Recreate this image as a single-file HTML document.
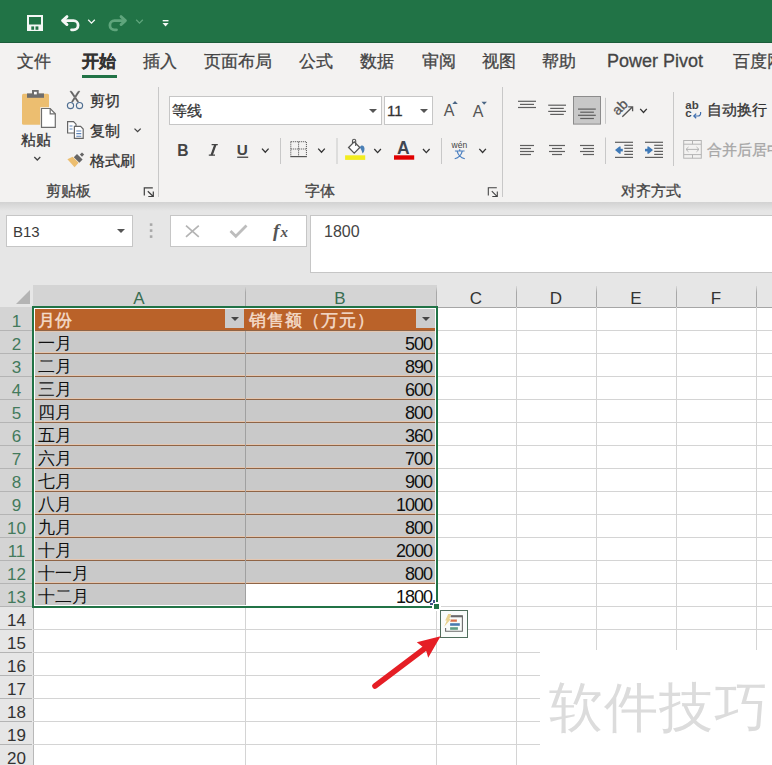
<!DOCTYPE html>
<html><head><meta charset="utf-8">
<style>
*{margin:0;padding:0;box-sizing:border-box}
html,body{width:772px;height:765px;overflow:hidden;background:#fff;font-family:"Liberation Sans",sans-serif}
div{position:absolute}
.a{white-space:nowrap;line-height:1}
.tab{top:53px;font-size:17px;color:#444;white-space:nowrap;line-height:1;-webkit-text-stroke-width:0.3px}
.lbl{font-size:15px;color:#333;line-height:1;white-space:nowrap;-webkit-text-stroke-width:0.3px}
.glbl{top:183px;font-size:15px;color:#444;line-height:1;white-space:nowrap;-webkit-text-stroke-width:0.3px}
.sep{width:1px;background:#c8c8c8}
.box{background:#fff;border:1px solid #c6c6c6}
.tri{width:0;height:0;border-left:4px solid transparent;border-right:4px solid transparent;border-top:4px solid #555}
.rh{font-size:17px;line-height:1;text-align:center;width:33px;left:0}
.ch{font-size:17px;line-height:1;text-align:center;top:290px}
.ct{font-size:17px;line-height:1;white-space:nowrap;color:#111}
.num{font-size:18px;line-height:1;white-space:nowrap;color:#111;text-align:right}
</style></head><body>
<div style="left:0;top:0;width:772px;height:43px;background:#217346;border-bottom:1px solid #1b5c3a"></div>
<svg style="position:absolute;left:0;top:0" width="200" height="42" viewBox="0 0 200 42">
<rect x="27" y="15" width="16" height="16" fill="#f4f7f5"/>
<rect x="29" y="17" width="12" height="7.5" fill="#217346"/>
<rect x="31.3" y="26.4" width="2.8" height="3.4" fill="#217346"/>
<rect x="35.5" y="26.4" width="2.9" height="3.4" fill="#217346"/>
<path d="M63 20.6 H73.5 A4.6 4.6 0 0 1 73.5 29.8 H71.5" fill="none" stroke="#f4f7f5" stroke-width="2.8" stroke-linecap="round"/>
<path d="M67 16.6 L62.6 20.6 L67 24.6" fill="none" stroke="#f4f7f5" stroke-width="2.8" stroke-linecap="round" stroke-linejoin="round"/>
<path d="M88.2 19.8 L91.5 23.1 L94.8 19.8" fill="none" stroke="#f4f7f5" stroke-width="1.3"/>
<path d="M125 20.6 H114.5 A4.6 4.6 0 0 0 114.5 29.8 H116.5" fill="none" stroke="#5fa57c" stroke-width="2.8" stroke-linecap="round"/>
<path d="M121 16.6 L125.4 20.6 L121 24.6" fill="none" stroke="#5fa57c" stroke-width="2.8" stroke-linecap="round" stroke-linejoin="round"/>
<path d="M136.2 19.8 L139.5 23.1 L142.8 19.8" fill="none" stroke="#5fa57c" stroke-width="1.3"/>
<rect x="162.7" y="20" width="5.8" height="1.4" fill="#f4f7f5"/>
<path d="M162.5 23 H168.6 L165.55 26.4 Z" fill="#f4f7f5"/>
</svg>
<div style="left:0;top:43px;width:772px;height:159px;background:#f3f2f1"></div>
<div style="left:0;top:202px;width:772px;height:83px;background:#e6e6e6"></div>
<div style="left:0;top:202px;width:772px;height:9px;background:linear-gradient(#d2d2d2,#e6e6e6)"></div>
<div class="tab" style="left:17px">文件</div>
<div class="tab" style="left:143px">插入</div>
<div class="tab" style="left:204px">页面布局</div>
<div class="tab" style="left:299px">公式</div>
<div class="tab" style="left:360px">数据</div>
<div class="tab" style="left:422px">审阅</div>
<div class="tab" style="left:482px">视图</div>
<div class="tab" style="left:542px">帮助</div>
<div class="tab" style="left:733px">百度网盘</div>
<div class="tab" style="left:82px;font-weight:bold;color:#333">开始</div>
<div style="left:82px;top:75px;width:35px;height:3px;background:#217346"></div>
<div class="tab" style="left:607px;font-size:18px;top:52px">Power Pivot</div>
<div class="lbl" style="left:21px;top:132px">粘贴</div>
<div class="lbl" style="left:90px;top:93px">剪切</div>
<div class="lbl" style="left:90px;top:123px">复制</div>
<div class="lbl" style="left:90px;top:153px">格式刷</div>
<div class="glbl" style="left:46px">剪贴板</div>
<div class="sep" style="left:158px;top:87px;height:110px"></div>
<svg style="position:absolute;left:0;top:80px" width="160" height="125" viewBox="0 80 160 125">
<rect x="22" y="93.8" width="27" height="31" rx="1.5" fill="#ecbe70"/>
<rect x="27" y="93.4" width="17" height="4.4" fill="#6e6e6e"/>
<rect x="32" y="90" width="6.7" height="4" fill="#6e6e6e"/>
<rect x="34" y="91.8" width="2.8" height="2.6" fill="#fff"/>
<path d="M40.2 107.2 H50.8 L56.6 113.2 V128.6 H40.2 Z" fill="#f3f2f1"/>
<path d="M41.5 108.5 H50.2 L55.3 113.8 V127.3 H41.5 Z" fill="#fff" stroke="#6e6e6e" stroke-width="1.2"/>
<path d="M50.2 108.5 V113.8 H55.3" fill="none" stroke="#6e6e6e" stroke-width="1.2"/>
<path d="M34.3 157 L37.3 160 L40.3 157" fill="none" stroke="#444" stroke-width="1.3"/>
<path d="M134.5 128.6 L137.6 131.7 L140.7 128.6" fill="none" stroke="#444" stroke-width="1.3"/>
<path d="M70 91.2 L71.8 91.4 L78.6 101.6 L77.6 102.2 Z M79.8 91.2 L78 91.4 L71.6 101.6 L72.6 102.2 Z" fill="#5f5f5f" stroke="#5f5f5f" stroke-width="0.6"/>
<circle cx="70.5" cy="105.6" r="3.1" fill="none" stroke="#4f6f92" stroke-width="1.2"/>
<circle cx="79.5" cy="105.6" r="3.1" fill="none" stroke="#4f6f92" stroke-width="1.2"/>
<path d="M67.6 121.6 H73.5 L76 124.2 V133 H67.6 Z" fill="#fff" stroke="#666" stroke-width="1.2"/>
<path d="M69.5 126 H72.5 M69.5 129 H72.5" stroke="#5c83b8" stroke-width="1.1"/>
<path d="M74.4 126.4 H80.6 L83.2 129 V138.3 H74.4 Z" fill="#fff" stroke="#666" stroke-width="1.2"/>
<path d="M76.3 131 H81.3 M76.3 133.6 H81.3 M76.3 136.2 H81.3" stroke="#5c83b8" stroke-width="1.1"/>
<path d="M82 152.4 L84.2 154.6 L82 156.8 L79.8 154.6 Z" fill="#666"/>
<path d="M73.8 157.2 L77 154 L82.6 159.6 L79.4 162.8 Z" fill="#666"/>
<path d="M67.4 159.2 L72.6 156.8 L78.6 162.8 L74.6 167.2 Z" fill="#ecbe70"/>
<path d="M144.3 195.5 V187.8 H152.8 M147.8 191.2 L153 196.3 M153.3 191.5 V196.5 H148.3" fill="none" stroke="#404040" stroke-width="1.2"/>
</svg>
<div class="box" style="left:169px;top:96px;width:213px;height:29px"></div>
<div class="lbl" style="left:172px;top:103px">等线</div>
<div class="tri" style="left:369px;top:109px"></div>
<div class="box" style="left:384px;top:96px;width:49px;height:29px"></div>
<div class="lbl" style="left:387px;top:103px">11</div>
<div class="tri" style="left:420px;top:109px"></div>
<div class="glbl" style="left:305px">字体</div>
<div class="sep" style="left:502px;top:87px;height:110px"></div>
<svg style="position:absolute;left:160px;top:85px" width="612" height="120" viewBox="160 85 612 120"><text x="443.8" y="115.8" font-family="Liberation Sans" font-size="16" fill="#555">A</text><path d="M452.3 104 L455 100.9 L457.8 104 Z" fill="#4a6584"/><text x="472.8" y="117" font-family="Liberation Sans" font-size="16" fill="#555">A</text><path d="M481.5 101.7 L484.2 104.8 L486.9 101.7 Z" fill="#4a6584"/><text x="177.3" y="155.8" font-family="Liberation Sans" font-weight="bold" font-size="15.6" fill="#444">B</text><path d="M211.6 144.6 H217.8 M208.8 155.2 H215 M215.4 144.6 L211.6 155.2" fill="none" stroke="#444" stroke-width="1.3"/><path d="M214.2 144.6 L216.6 144.6 L212.8 155.2 L210.4 155.2 Z" fill="#444"/><text x="236.8" y="155.4" font-family="Liberation Sans" font-weight="bold" font-size="15.3" fill="#444">U</text><rect x="237.2" y="156.6" width="11" height="1.3" fill="#444"/><path d="M262 148.6 L265.3 152.2 L268.6 148.6" fill="none" stroke="#333" stroke-width="1.3"/><rect x="280" y="138" width="1" height="26" fill="#c8c8c8"/><path d="M290.8 141.7 H306.4 V156 M290.8 141.7 V156 M290.8 149 H306.4 M298.6 141.7 V156" fill="none" stroke="#444" stroke-width="1" stroke-dasharray="1 1"/><rect x="290.3" y="156" width="16.6" height="1.2" fill="#555"/><path d="M318.2 148.6 L321.5 152.2 L324.8 148.6" fill="none" stroke="#333" stroke-width="1.3"/><rect x="336.5" y="138" width="1" height="26" fill="#c8c8c8"/><path d="M348.6 147.5 L354.2 141.9 L359.8 147.5 L354.2 153.1 Z" fill="#fff" stroke="#555" stroke-width="1.3"/><path d="M352.5 143.6 V140.8 A1.6 1.6 0 0 1 355.7 140.8 V146" fill="none" stroke="#555" stroke-width="1.1"/><path d="M359.8 147.5 C361 144.5 364.2 145 364.5 148.5 C364.6 151 363.5 152.8 362.5 153.5 C362 151 361 149 359.8 147.5 Z" fill="#4a7fb5"/><rect x="345.1" y="155.3" width="20.1" height="4.6" fill="#f2ec1e"/><path d="M374.3 149 L377.6 152.6 L380.90000000000003 149" fill="none" stroke="#333" stroke-width="1.3"/><text x="396.9" y="154.1" font-family="Liberation Sans" font-weight="bold" font-size="17.5" fill="#404650">A</text><rect x="394" y="155.3" width="20.2" height="4.4" fill="#e00000"/><path d="M423 149 L426.3 152.6 L429.6 149" fill="none" stroke="#333" stroke-width="1.3"/><rect x="441" y="138" width="1" height="26" fill="#c8c8c8"/><text x="451.6" y="148.2" font-family="Liberation Sans" font-size="8.5" fill="#444">wén</text><path d="M454.9 151 H464.6 M459.7 149.2 V151 M457.2 151.3 C458 154.5 460.5 157.5 464.8 158.8 M462.2 151.3 C461.4 154.5 459 157.5 454.7 158.8" fill="none" stroke="#4a7fc0" stroke-width="1.2"/><path d="M479.3 148.9 L482.6 152.5 L485.90000000000003 148.9" fill="none" stroke="#333" stroke-width="1.3"/><path d="M488.3 195.5 V187.8 H496.8 M491.8 191.2 L497 196.3 M497.3 191.5 V196.5 H492.3" fill="none" stroke="#404040" stroke-width="1.05"/><rect x="518" y="100.7" width="18" height="1.2" fill="#5f5f5f"/><rect x="520" y="103.80000000000001" width="14" height="1.2" fill="#5f5f5f"/><rect x="518" y="106.9" width="18" height="1.2" fill="#5f5f5f"/><rect x="548.2" y="104.60000000000001" width="17.799999999999955" height="1.2" fill="#5f5f5f"/><rect x="550.2" y="107.80000000000001" width="13.599999999999909" height="1.2" fill="#5f5f5f"/><rect x="548.2" y="110.80000000000001" width="17.799999999999955" height="1.2" fill="#5f5f5f"/><rect x="550.2" y="113.80000000000001" width="13.599999999999909" height="1.2" fill="#5f5f5f"/><rect x="573.5" y="96.5" width="27" height="27.6" fill="#c8c8c8" stroke="#8c8c8c" stroke-width="1"/><rect x="578" y="108.5" width="17.799999999999955" height="1.2" fill="#5f5f5f"/><rect x="580.2" y="111.60000000000001" width="13.699999999999932" height="1.2" fill="#5f5f5f"/><rect x="578" y="114.7" width="17.799999999999955" height="1.2" fill="#5f5f5f"/><rect x="580.2" y="117.9" width="13.699999999999932" height="1.2" fill="#5f5f5f"/><rect x="605" y="97.8" width="1" height="26" fill="#c8c8c8"/><text x="0" y="0" font-family="Liberation Sans" font-size="14" fill="#555" stroke="#555" stroke-width="0.3" transform="translate(617.8 116) rotate(-45)">ab</text><path d="M622.3 116.8 L632.6 106.7 M628.2 106.9 H632.6 V111.3" fill="none" stroke="#555" stroke-width="1.3"/><path d="M640.2 108.9 L643.5 112.5 L646.8000000000001 108.9" fill="none" stroke="#333" stroke-width="1.3"/><rect x="520" y="144.9" width="14" height="1.2" fill="#5f5f5f"/><rect x="520" y="147.9" width="11" height="1.2" fill="#5f5f5f"/><rect x="520" y="150.9" width="14" height="1.2" fill="#5f5f5f"/><rect x="520" y="153.9" width="11" height="1.2" fill="#5f5f5f"/><rect x="549" y="144.9" width="16" height="1.2" fill="#5f5f5f"/><rect x="552" y="147.9" width="10" height="1.2" fill="#5f5f5f"/><rect x="549" y="150.9" width="16" height="1.2" fill="#5f5f5f"/><rect x="552" y="153.9" width="10" height="1.2" fill="#5f5f5f"/><rect x="580" y="144.9" width="14" height="1.2" fill="#5f5f5f"/><rect x="583" y="147.9" width="11" height="1.2" fill="#5f5f5f"/><rect x="580" y="150.9" width="14" height="1.2" fill="#5f5f5f"/><rect x="583" y="153.9" width="11" height="1.2" fill="#5f5f5f"/><rect x="605" y="137.5" width="1" height="26.5" fill="#c8c8c8"/><rect x="615" y="141.70000000000002" width="18" height="1.2" fill="#5f5f5f"/><rect x="624.3" y="144.70000000000002" width="8.700000000000045" height="1.2" fill="#5f5f5f"/><rect x="624.3" y="147.70000000000002" width="8.700000000000045" height="1.2" fill="#5f5f5f"/><rect x="624.3" y="150.8" width="8.700000000000045" height="1.2" fill="#5f5f5f"/><rect x="624.3" y="153.8" width="8.700000000000045" height="1.2" fill="#5f5f5f"/><rect x="615" y="156.8" width="18" height="1.2" fill="#5f5f5f"/><path d="M622.8 150.1 H618" stroke="#3f7ab8" stroke-width="2.6"/><path d="M615 150.1 L619.4 146.4 L620.6 146.4 L620.6 153.8 L619.4 153.8 Z" fill="#3f7ab8"/><rect x="645" y="141.70000000000002" width="18" height="1.2" fill="#5f5f5f"/><rect x="654.2" y="144.70000000000002" width="8.799999999999955" height="1.2" fill="#5f5f5f"/><rect x="654.2" y="147.70000000000002" width="8.799999999999955" height="1.2" fill="#5f5f5f"/><rect x="654.2" y="150.8" width="8.799999999999955" height="1.2" fill="#5f5f5f"/><rect x="654.2" y="153.8" width="8.799999999999955" height="1.2" fill="#5f5f5f"/><rect x="645" y="156.8" width="18" height="1.2" fill="#5f5f5f"/><path d="M645 150.1 H649.8" stroke="#3f7ab8" stroke-width="2.6"/><path d="M653 150.1 L648.6 146.4 L647.4 146.4 L647.4 153.8 L648.6 153.8 Z" fill="#3f7ab8"/><text x="685.3" y="109.4" font-family="Liberation Sans" font-weight="bold" font-size="11.5" fill="#444">ab</text><text x="685.3" y="117.4" font-family="Liberation Sans" font-weight="bold" font-size="11.5" fill="#444">c</text><path d="M700.6 112 V113.5 A2.5 2.5 0 0 1 698 116 H694 M696.2 113.6 L693.8 116 L696.2 118.3" fill="none" stroke="#3f6fb0" stroke-width="1.2"/><rect x="683.7" y="140.5" width="17.6" height="17.7" fill="none" stroke="#b4b4b4" stroke-width="1"/><path d="M683.7 144.2 H701.3 M683.7 154.6 H701.3 M692.5 140.5 V144.2 M692.5 154.6 V158.2 M686 149.4 H699 M688.5 147 L686 149.4 L688.5 151.8 M696.5 147 L699 149.4 L696.5 151.8" fill="none" stroke="#b4b4b4" stroke-width="1"/></svg>
<div class="glbl" style="left:621px">对齐方式</div>
<div class="lbl" style="left:707px;top:102px">自动换行</div>
<div class="lbl" style="left:707px;top:142px;color:#a6a6a6">合并后居中</div>
<div class="sep" style="left:673px;top:92px;height:74px"></div>
<div class="box" style="left:6px;top:215px;width:127px;height:32px"></div>
<div class="a" style="left:13px;top:224px;font-size:15px;color:#3a3a3a">B13</div>
<div class="tri" style="left:117px;top:229px"></div>
<div class="box" style="left:170px;top:215px;width:137px;height:32px"></div>
<div class="box" style="left:310px;top:215px;width:470px;height:58px"></div>
<div class="a" style="left:324px;top:224px;font-size:16px;color:#444">1800</div>
<svg style="position:absolute;left:140px;top:210px" width="170" height="40" viewBox="140 210 170 40">
<rect x="149.8" y="223.3" width="2.6" height="2.6" fill="#a8a8a8"/>
<rect x="149.8" y="229.3" width="2.6" height="2.6" fill="#a8a8a8"/>
<rect x="149.8" y="235.3" width="2.6" height="2.6" fill="#a8a8a8"/>
<path d="M186 225.6 L198.8 236.8 M198.8 225.6 L186 236.8" stroke="#b4b4b4" stroke-width="1.7"/>
<path d="M230.5 231 L235.8 236.3 L246.5 225.6" fill="none" stroke="#bdbdbd" stroke-width="2.8"/>
<text x="273" y="236.8" font-family="Liberation Serif" font-style="italic" font-weight="bold" font-size="19" fill="#555">f</text>
<text x="280.6" y="236.8" font-family="Liberation Serif" font-style="italic" font-weight="bold" font-size="15" fill="#555">x</text>
</svg>
<div style="left:0;top:285px;width:772px;height:22px;background:#e6e6e6"></div>
<div style="left:33px;top:285px;width:404px;height:22px;background:#d4d4d4"></div>
<div style="left:16px;top:290px;width:0;height:0;border-left:14px solid transparent;border-bottom:14px solid #b4b4b4"></div>
<div style="left:0;top:307px;width:33px;height:1px;background:#bdbdbd"></div>
<div style="left:436px;top:307px;width:336px;height:1px;background:#a6a6a6"></div>
<div style="left:245px;top:286px;width:1px;height:21px;background:linear-gradient(#d8d8d8,#a8a8a8 30%)"></div>
<div style="left:436px;top:286px;width:1px;height:21px;background:linear-gradient(#d8d8d8,#a8a8a8 30%)"></div>
<div style="left:516px;top:286px;width:1px;height:21px;background:linear-gradient(#d8d8d8,#a8a8a8 30%)"></div>
<div style="left:596px;top:286px;width:1px;height:21px;background:linear-gradient(#d8d8d8,#a8a8a8 30%)"></div>
<div style="left:676px;top:286px;width:1px;height:21px;background:linear-gradient(#d8d8d8,#a8a8a8 30%)"></div>
<div style="left:756px;top:286px;width:1px;height:21px;background:linear-gradient(#d8d8d8,#a8a8a8 30%)"></div>
<div class="ch" style="left:119px;width:40px;color:#3a6e52">A</div>
<div class="ch" style="left:320px;width:40px;color:#3a6e52">B</div>
<div class="ch" style="left:456px;width:40px;color:#333">C</div>
<div class="ch" style="left:536px;width:40px;color:#333">D</div>
<div class="ch" style="left:616px;width:40px;color:#333">E</div>
<div class="ch" style="left:696px;width:40px;color:#333">F</div>
<div style="left:0;top:307px;width:33px;height:300px;background:#d4d4d4"></div>
<div style="left:0;top:607px;width:33px;height:158px;background:#e6e6e6"></div>
<div style="left:33px;top:607px;width:1px;height:158px;background:#b8b8b8"></div>
<div style="left:0;top:330px;width:32px;height:1px;background:#b4b4b4"></div>
<div class="rh" style="top:313px;color:#437a5c">1</div>
<div style="left:0;top:353px;width:32px;height:1px;background:#b4b4b4"></div>
<div class="rh" style="top:336px;color:#437a5c">2</div>
<div style="left:0;top:376px;width:32px;height:1px;background:#b4b4b4"></div>
<div class="rh" style="top:359px;color:#437a5c">3</div>
<div style="left:0;top:399px;width:32px;height:1px;background:#b4b4b4"></div>
<div class="rh" style="top:382px;color:#437a5c">4</div>
<div style="left:0;top:422px;width:32px;height:1px;background:#b4b4b4"></div>
<div class="rh" style="top:405px;color:#437a5c">5</div>
<div style="left:0;top:445px;width:32px;height:1px;background:#b4b4b4"></div>
<div class="rh" style="top:428px;color:#437a5c">6</div>
<div style="left:0;top:468px;width:32px;height:1px;background:#b4b4b4"></div>
<div class="rh" style="top:451px;color:#437a5c">7</div>
<div style="left:0;top:491px;width:32px;height:1px;background:#b4b4b4"></div>
<div class="rh" style="top:474px;color:#437a5c">8</div>
<div style="left:0;top:514px;width:32px;height:1px;background:#b4b4b4"></div>
<div class="rh" style="top:497px;color:#437a5c">9</div>
<div style="left:0;top:537px;width:32px;height:1px;background:#b4b4b4"></div>
<div class="rh" style="top:520px;color:#437a5c">10</div>
<div style="left:0;top:560px;width:32px;height:1px;background:#b4b4b4"></div>
<div class="rh" style="top:543px;color:#437a5c">11</div>
<div style="left:0;top:583px;width:32px;height:1px;background:#b4b4b4"></div>
<div class="rh" style="top:566px;color:#437a5c">12</div>
<div style="left:0;top:606px;width:32px;height:1px;background:#b4b4b4"></div>
<div class="rh" style="top:589px;color:#437a5c">13</div>
<div style="left:0;top:629px;width:32px;height:1px;background:#b4b4b4"></div>
<div class="rh" style="top:612px;color:#333">14</div>
<div style="left:0;top:652px;width:32px;height:1px;background:#b4b4b4"></div>
<div class="rh" style="top:635px;color:#333">15</div>
<div style="left:0;top:675px;width:32px;height:1px;background:#b4b4b4"></div>
<div class="rh" style="top:658px;color:#333">16</div>
<div style="left:0;top:698px;width:32px;height:1px;background:#b4b4b4"></div>
<div class="rh" style="top:681px;color:#333">17</div>
<div style="left:0;top:721px;width:32px;height:1px;background:#b4b4b4"></div>
<div class="rh" style="top:704px;color:#333">18</div>
<div style="left:0;top:744px;width:32px;height:1px;background:#b4b4b4"></div>
<div class="rh" style="top:727px;color:#333">19</div>
<div style="left:0;top:767px;width:32px;height:1px;background:#b4b4b4"></div>
<div class="rh" style="top:750px;color:#333">20</div>
<div style="left:436px;top:330px;width:336px;height:1px;background:#d4d4d4"></div>
<div style="left:436px;top:353px;width:336px;height:1px;background:#d4d4d4"></div>
<div style="left:436px;top:376px;width:336px;height:1px;background:#d4d4d4"></div>
<div style="left:436px;top:399px;width:336px;height:1px;background:#d4d4d4"></div>
<div style="left:436px;top:422px;width:336px;height:1px;background:#d4d4d4"></div>
<div style="left:436px;top:445px;width:336px;height:1px;background:#d4d4d4"></div>
<div style="left:436px;top:468px;width:336px;height:1px;background:#d4d4d4"></div>
<div style="left:436px;top:491px;width:336px;height:1px;background:#d4d4d4"></div>
<div style="left:436px;top:514px;width:336px;height:1px;background:#d4d4d4"></div>
<div style="left:436px;top:537px;width:336px;height:1px;background:#d4d4d4"></div>
<div style="left:436px;top:560px;width:336px;height:1px;background:#d4d4d4"></div>
<div style="left:436px;top:583px;width:336px;height:1px;background:#d4d4d4"></div>
<div style="left:436px;top:606px;width:336px;height:1px;background:#d4d4d4"></div>
<div style="left:436px;top:629px;width:336px;height:1px;background:#d4d4d4"></div>
<div style="left:436px;top:652px;width:336px;height:1px;background:#d4d4d4"></div>
<div style="left:436px;top:675px;width:336px;height:1px;background:#d4d4d4"></div>
<div style="left:436px;top:698px;width:336px;height:1px;background:#d4d4d4"></div>
<div style="left:436px;top:721px;width:336px;height:1px;background:#d4d4d4"></div>
<div style="left:436px;top:744px;width:336px;height:1px;background:#d4d4d4"></div>
<div style="left:436px;top:767px;width:336px;height:1px;background:#d4d4d4"></div>
<div style="left:33px;top:629px;width:403px;height:1px;background:#d4d4d4"></div>
<div style="left:33px;top:652px;width:403px;height:1px;background:#d4d4d4"></div>
<div style="left:33px;top:675px;width:403px;height:1px;background:#d4d4d4"></div>
<div style="left:33px;top:698px;width:403px;height:1px;background:#d4d4d4"></div>
<div style="left:33px;top:721px;width:403px;height:1px;background:#d4d4d4"></div>
<div style="left:33px;top:744px;width:403px;height:1px;background:#d4d4d4"></div>
<div style="left:33px;top:767px;width:403px;height:1px;background:#d4d4d4"></div>
<div style="left:436px;top:307px;width:1px;height:458px;background:#d4d4d4"></div>
<div style="left:516px;top:307px;width:1px;height:458px;background:#d4d4d4"></div>
<div style="left:596px;top:307px;width:1px;height:458px;background:#d4d4d4"></div>
<div style="left:676px;top:307px;width:1px;height:458px;background:#d4d4d4"></div>
<div style="left:756px;top:307px;width:1px;height:458px;background:#d4d4d4"></div>
<div style="left:245px;top:607px;width:1px;height:158px;background:#d4d4d4"></div>
<div style="left:34px;top:308px;width:402px;height:298px;background:#fff"></div>
<div style="left:35px;top:309px;width:400px;height:296px;background:#c9c9c9"></div>
<div style="left:35px;top:309px;width:400px;height:21px;background:#ba6229"></div>
<div style="left:246px;top:584px;width:190px;height:22px;background:#fff"></div>
<div style="left:35px;top:330px;width:400px;height:1px;background:#8f6446"></div>
<div style="left:35px;top:331px;width:400px;height:1px;background:#e4c6b0"></div>
<div style="left:35px;top:352px;width:400px;height:1px;background:#e4c6b0"></div>
<div style="left:35px;top:353px;width:400px;height:1px;background:#8f6446"></div>
<div style="left:35px;top:375px;width:400px;height:1px;background:#e4c6b0"></div>
<div style="left:35px;top:376px;width:400px;height:1px;background:#8f6446"></div>
<div style="left:35px;top:398px;width:400px;height:1px;background:#e4c6b0"></div>
<div style="left:35px;top:399px;width:400px;height:1px;background:#8f6446"></div>
<div style="left:35px;top:421px;width:400px;height:1px;background:#e4c6b0"></div>
<div style="left:35px;top:422px;width:400px;height:1px;background:#8f6446"></div>
<div style="left:35px;top:444px;width:400px;height:1px;background:#e4c6b0"></div>
<div style="left:35px;top:445px;width:400px;height:1px;background:#8f6446"></div>
<div style="left:35px;top:467px;width:400px;height:1px;background:#e4c6b0"></div>
<div style="left:35px;top:468px;width:400px;height:1px;background:#8f6446"></div>
<div style="left:35px;top:490px;width:400px;height:1px;background:#e4c6b0"></div>
<div style="left:35px;top:491px;width:400px;height:1px;background:#8f6446"></div>
<div style="left:35px;top:513px;width:400px;height:1px;background:#e4c6b0"></div>
<div style="left:35px;top:514px;width:400px;height:1px;background:#8f6446"></div>
<div style="left:35px;top:536px;width:400px;height:1px;background:#e4c6b0"></div>
<div style="left:35px;top:537px;width:400px;height:1px;background:#8f6446"></div>
<div style="left:35px;top:559px;width:400px;height:1px;background:#e4c6b0"></div>
<div style="left:35px;top:560px;width:400px;height:1px;background:#8f6446"></div>
<div style="left:35px;top:582px;width:400px;height:1px;background:#e4c6b0"></div>
<div style="left:35px;top:583px;width:400px;height:1px;background:#8f6446"></div>
<div style="left:245px;top:331px;width:1px;height:274px;background:#a0a0a0"></div>
<div style="left:225px;top:309px;width:19px;height:19px;background:#cbcbcb"></div>
<div class="tri" style="left:231px;top:317px;border-top-color:#444"></div>
<div style="left:416px;top:309px;width:19px;height:19px;background:#cbcbcb"></div>
<div class="tri" style="left:422px;top:317px;border-top-color:#444"></div>
<div class="ct" style="left:38px;top:312px;color:#f4dccb;-webkit-text-stroke-width:0.45px">月份</div>
<div class="ct" style="left:249px;top:312px;color:#f4dccb;letter-spacing:1px;-webkit-text-stroke-width:0.45px">销售额（万元）</div>
<div class="ct" style="left:38px;top:335px">一月</div>
<div class="num" style="left:300px;width:132px;top:335px;letter-spacing:-1px">500</div>
<div class="ct" style="left:38px;top:358px">二月</div>
<div class="num" style="left:300px;width:132px;top:358px;letter-spacing:-1px">890</div>
<div class="ct" style="left:38px;top:381px">三月</div>
<div class="num" style="left:300px;width:132px;top:381px;letter-spacing:-1px">600</div>
<div class="ct" style="left:38px;top:404px">四月</div>
<div class="num" style="left:300px;width:132px;top:404px;letter-spacing:-1px">800</div>
<div class="ct" style="left:38px;top:427px">五月</div>
<div class="num" style="left:300px;width:132px;top:427px;letter-spacing:-1px">360</div>
<div class="ct" style="left:38px;top:450px">六月</div>
<div class="num" style="left:300px;width:132px;top:450px;letter-spacing:-1px">700</div>
<div class="ct" style="left:38px;top:473px">七月</div>
<div class="num" style="left:300px;width:132px;top:473px;letter-spacing:-1px">900</div>
<div class="ct" style="left:38px;top:496px">八月</div>
<div class="num" style="left:300px;width:132px;top:496px;letter-spacing:-1px">1000</div>
<div class="ct" style="left:38px;top:519px">九月</div>
<div class="num" style="left:300px;width:132px;top:519px;letter-spacing:-1px">800</div>
<div class="ct" style="left:38px;top:542px">十月</div>
<div class="num" style="left:300px;width:132px;top:542px;letter-spacing:-1px">2000</div>
<div class="ct" style="left:38px;top:565px">十一月</div>
<div class="num" style="left:300px;width:132px;top:565px;letter-spacing:-1px">800</div>
<div class="ct" style="left:38px;top:588px">十二月</div>
<div class="num" style="left:300px;width:132px;top:588px;letter-spacing:-1px">1800</div>
<div style="left:32px;top:306px;width:406px;height:302px;border:2px solid #217346"></div>
<div style="left:432px;top:602px;width:9px;height:9px;background:#fff"></div>
<div style="left:434px;top:604px;width:5px;height:5px;background:#217346"></div>
<div style="left:430px;top:603px;width:3px;height:2px;background:#44538a"></div>
<div style="left:433px;top:600px;width:2px;height:3px;background:#44538a"></div>
<svg style="position:absolute;left:360px;top:600px" width="120" height="100" viewBox="360 600 120 100">
<rect x="440.5" y="610.5" width="27" height="27" fill="#f9fcfa" stroke="#4f6e5c" stroke-width="1"/>
<path d="M451.5 616.2 H462.4 V631.2 H445.6 V628" fill="none" stroke="#6a6a6a" stroke-width="1.1"/>
<rect x="450.6" y="615.2" width="12.2" height="2.1" fill="#6a6a6a"/>
<path d="M451 619.4 H456.9 V621.8 H450.2 Z" fill="#d9704a"/>
<rect x="450.1" y="623.2" width="9.7" height="2.6" fill="#4a7ab0"/>
<rect x="450.1" y="627.2" width="7.8" height="2.6" fill="#5e9c84"/>
<path d="M448.2 614 L451.2 614 L449.4 619 L451 619 L444.2 626.7 L446.8 620.6 L445.2 620.6 Z" fill="#e9d390"/>
<path d="M375 686 L424 649" stroke="#e51e25" stroke-width="5.6" stroke-linecap="round"/>
<path d="M440.6 636.3 L416.8 642.2 L422.5 646.8 L426.5 651.8 L428.2 657.8 Z" fill="#e51e25"/>
</svg>
<div style="left:540px;top:650px;width:232px;height:115px;background:#fff"></div>
<div class="a" style="left:549px;top:680px;font-size:54px;color:#dcdcdc;font-weight:500;letter-spacing:1px">软件技巧</div>
</body></html>
